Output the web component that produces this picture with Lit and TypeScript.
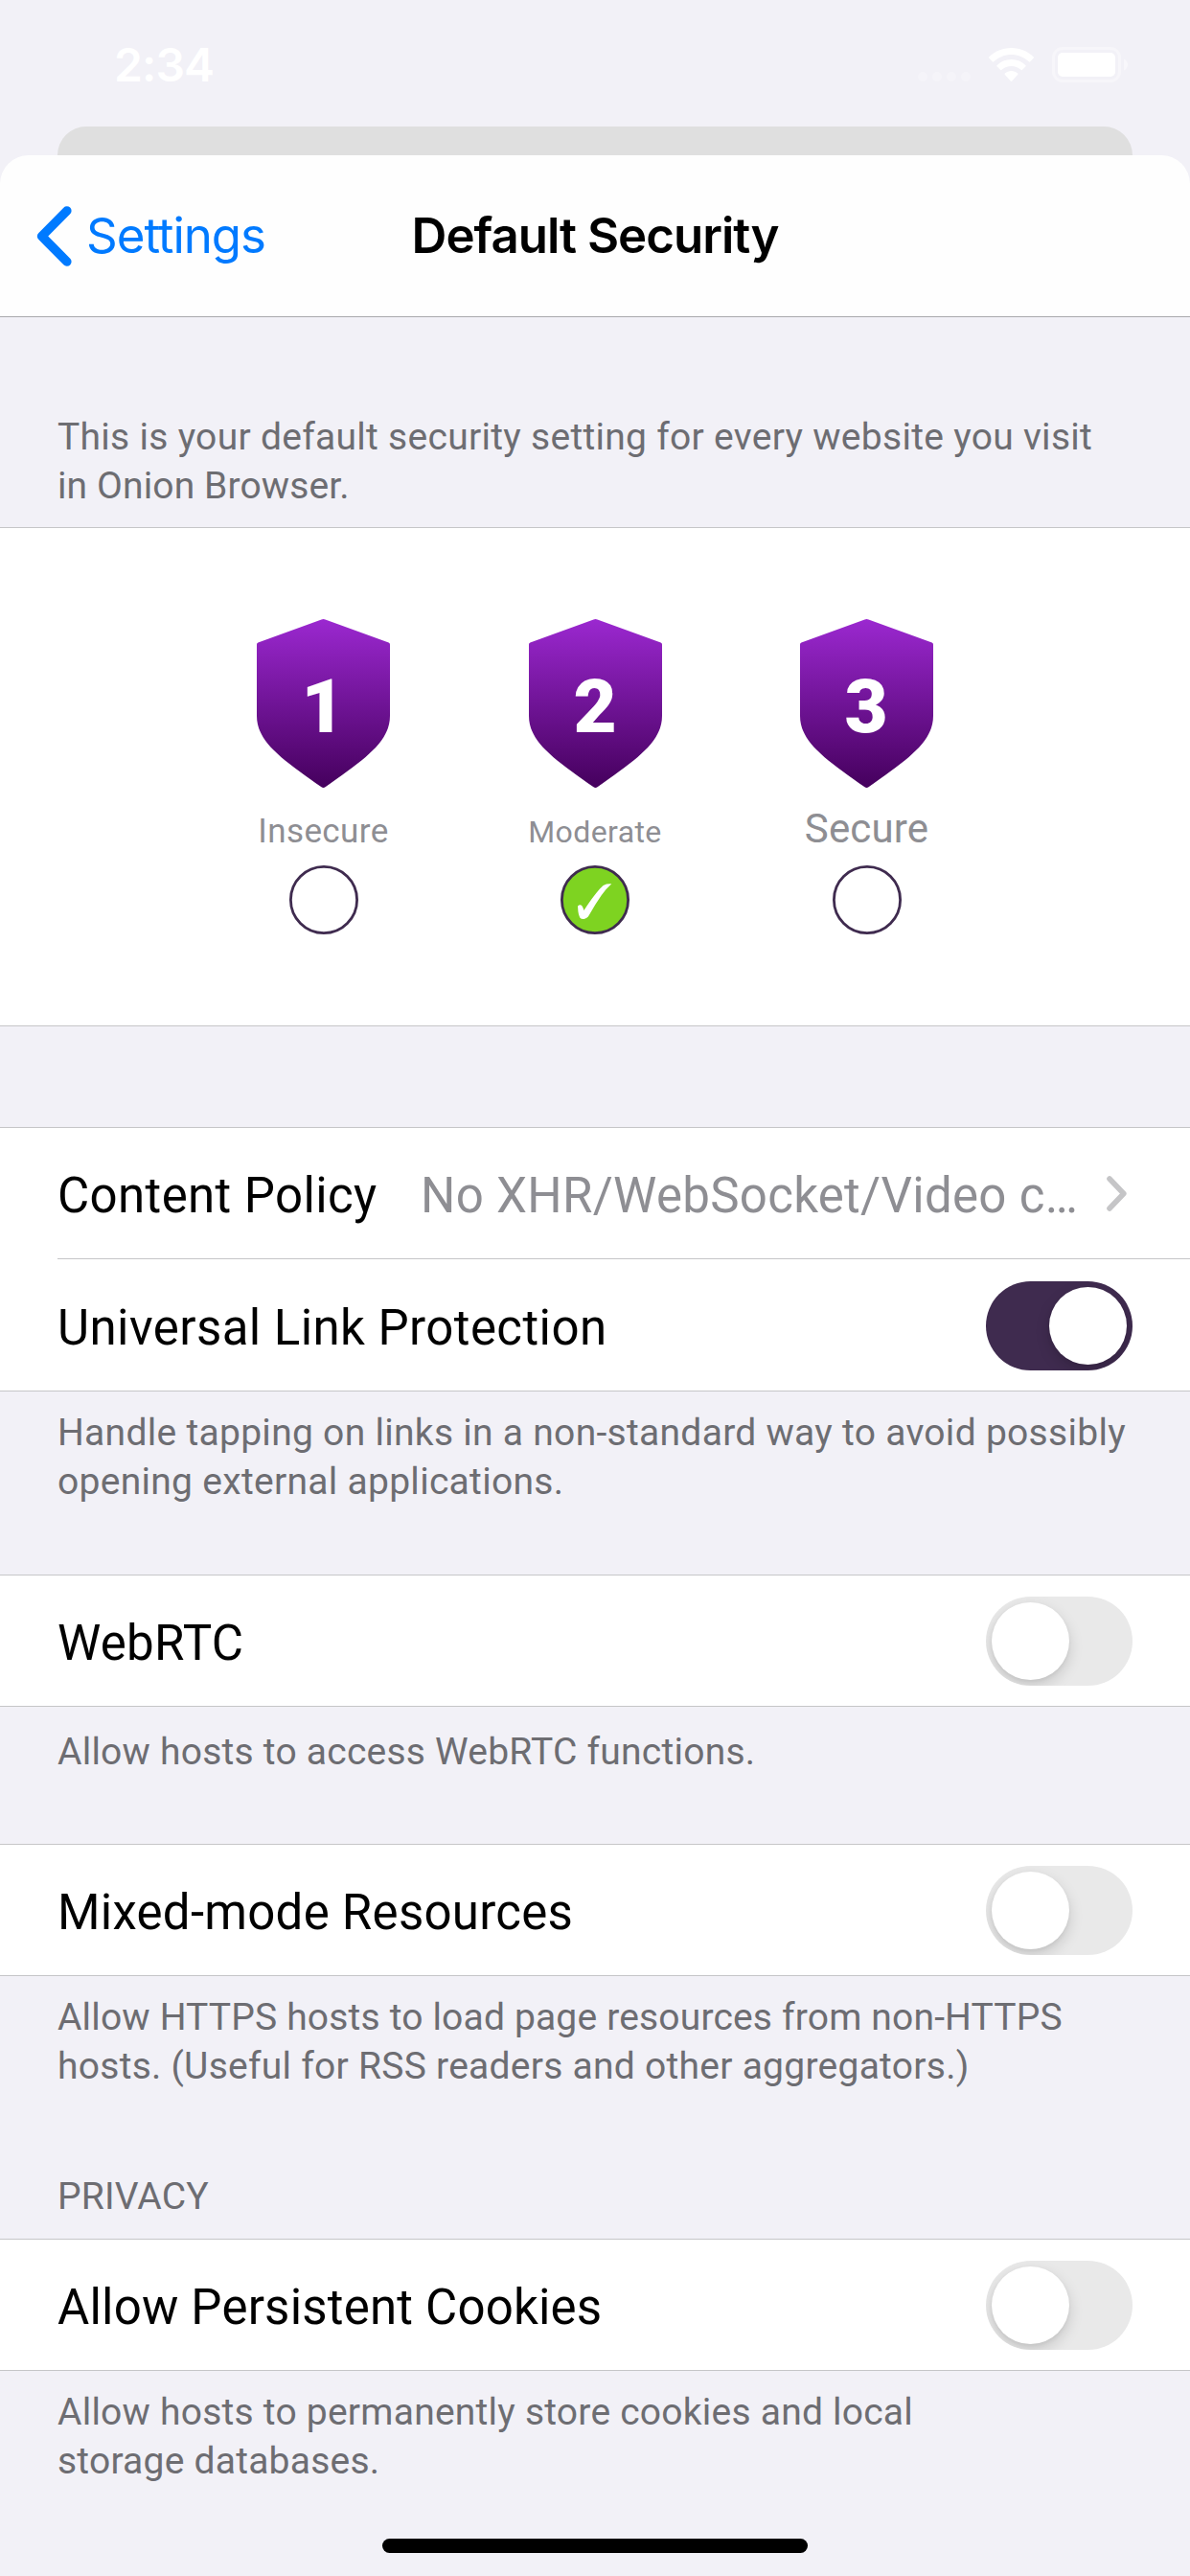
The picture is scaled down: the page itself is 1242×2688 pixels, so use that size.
import { LitElement, html, svg, css, nothing } from "lit";
import { customElement, property } from "lit/decorators.js";
import { styleMap } from "lit/directives/style-map.js";
import { classMap } from "lit/directives/class-map.js";

interface Line {
  text: string;
  tracking: number;
}

interface Level {
  digit: string;
  label: string;
  size: number;
  tracking: number;
  selected: boolean;
}

const LEVELS: Level[] = [
  { digit: "1", label: "Insecure", size: 35, tracking: 0.4, selected: false },
  { digit: "2", label: "Moderate", size: 32, tracking: 0.4, selected: true },
  { digit: "3", label: "Secure", size: 42, tracking: 0.15, selected: false },
];

const INTRO: Line[] = [
  { text: "This is your default security setting for every website you visit", tracking: 0.29 },
  { text: "in Onion Browser.", tracking: 0.12 },
];
const LINK_NOTE: Line[] = [
  { text: "Handle tapping on links in a non-standard way to avoid possibly", tracking: 0.29 },
  { text: "opening external applications.", tracking: 0.29 },
];
const WEBRTC_NOTE: Line[] = [
  { text: "Allow hosts to access WebRTC functions.", tracking: 0.23 },
];
const MIXED_NOTE: Line[] = [
  { text: "Allow HTTPS hosts to load page resources from non-HTTPS", tracking: 0.17 },
  { text: "hosts. (Useful for RSS readers and other aggregators.)", tracking: 0.26 },
];
const COOKIE_NOTE: Line[] = [
  { text: "Allow hosts to permanently store cookies and local", tracking: 0.23 },
  { text: "storage databases.", tracking: 0.23 },
];

const tracked = (l: Line) =>
  html`<span class="tracked" style=${styleMap({ letterSpacing: `${l.tracking}px` })}>${l.text}</span>`;

@customElement("toggle-switch")
export class ToggleSwitch extends LitElement {
  @property({ type: Boolean }) on = false;

  static styles = css`
    :host {
      display: block;
      flex: none;
    }
    .track {
      display: flex;
      box-sizing: border-box;
      width: 153px;
      height: 93px;
      padding: 6px;
      border-radius: 46.5px;
      background: #e9e9e9;
      overflow: hidden;
    }
    .track.on {
      justify-content: flex-end;
      background: #3f2b4f;
    }
    .knob {
      width: 81px;
      height: 81px;
      border-radius: 50%;
      background: #fff;
      box-shadow: 0 6px 15px rgba(0, 0, 0, 0.15), 0 2px 4px rgba(0, 0, 0, 0.05);
    }
  `;

  render() {
    return html`<div class=${classMap({ track: true, on: this.on })}><div class="knob"></div></div>`;
  }
}

@customElement("security-level")
export class SecurityLevel extends LitElement {
  @property({ attribute: false }) level!: Level;

  static styles = css`
    :host {
      display: flex;
      flex-direction: column;
      align-items: center;
      width: 139px;
    }
    .shield {
      display: block;
      width: 139px;
      height: 176px;
    }
    .digit {
      font: 900 78px Roboto, sans-serif;
      fill: #fff;
    }
    .label {
      height: 72px;
      padding-top: 9px;
      font-size: 36px;
      line-height: 73px;
      color: #8e8e93;
      white-space: nowrap;
    }
    .name {
      line-height: 0;
    }
    .radio {
      display: block;
      width: 72px;
      height: 72px;
    }
  `;

  render() {
    const { digit, label, size, tracking, selected } = this.level;
    return html`
      <svg class="shield" viewBox="0 0 139 176">
        <defs>
          <linearGradient id="fade" x1="0" y1="0" x2="0" y2="1">
            <stop offset="0" stop-color="#9b28d0" />
            <stop offset="1" stop-color="#45005d" />
          </linearGradient>
        </defs>
        <path
          fill="url(#fade)"
          d="M67.5 0.4 Q69.5 -0.4 71.5 0.4 L137.6 24.6 Q139 25.2 139 26.6 V101 C139 128 113 146 71.5 175.3 Q69.5 176.6 67.5 175.3 C26 146 0 128 0 101 V26.6 Q0 25.2 1.4 24.6 Z"
        />
        <text class="digit" x="69" y="118" text-anchor="middle">${digit}</text>
      </svg>
      <div class="label">
        <span class="name" style=${styleMap({ fontSize: `${size}px`, letterSpacing: `${tracking}px` })}>${label}</span>
      </div>
      <svg class="radio" viewBox="0 0 72 72">
        <circle cx="36" cy="36" r="34.6" fill=${selected ? "#7ed321" : "#fff"} stroke="#3f2b4f" stroke-width="2.8" />
        ${selected
          ? svg`<path fill="#fff" d="M18 42.4 Q20.6 40.4 22.4 42.2 Q23.6 43.8 24.4 47 Q33 33.5 41 24.4 Q44.6 20.4 48 19.6 Q50.6 19 53.3 19.3 Q47 25 42.7 31.2 Q36.5 40 29.8 52 Q27.6 55.8 24.4 55.9 Q21.4 56 20.2 54.4 Q18.8 51.8 18.4 48 Z" />`
          : nothing}
      </svg>
    `;
  }
}

@customElement("app-root")
export class AppRoot extends LitElement {
  static styles = css`
    :host {
      display: flex;
      flex-direction: column;
      width: 1242px;
      height: 2688px;
      overflow: hidden;
      background: #f2f1f7;
      font-family: Roboto, sans-serif;
      color: #000;
    }
    svg {
      display: block;
      flex: none;
    }
    .status {
      display: flex;
      align-items: flex-start;
      box-sizing: border-box;
      height: 132px;
      padding: 49px 65px 0 119px;
    }
    .time {
      margin: -10px auto 0 0;
      font: 600 48px/58px Inter, sans-serif;
      letter-spacing: -0.9px;
      color: #fff;
    }
    .dots {
      width: 56px;
      height: 10px;
      margin: 26px 18px 0 0;
    }
    .wifi {
      width: 47px;
      height: 35px;
      margin: 1px 19px 0 0;
    }
    .battery {
      width: 79px;
      height: 37px;
    }
    .peek {
      height: 30px;
      margin: 0 60px;
      border-radius: 30px 30px 0 0;
      background: #dfdfdf;
    }
    .nav {
      display: grid;
      grid-template-columns: 1fr auto 1fr;
      align-items: center;
      height: 168px;
      padding: 0 38px;
      border-bottom: 1px solid #a9a9ad;
      border-radius: 30px 30px 0 0;
      background: #fefefe;
      font-family: Inter, sans-serif;
      font-size: 51px;
      line-height: 62px;
    }
    .back {
      display: flex;
      align-items: center;
      gap: 15px;
      color: #007aff;
      letter-spacing: -1.04px;
    }
    .chevron {
      width: 37px;
      height: 63px;
    }
    .title {
      font-weight: 600;
      letter-spacing: -1px;
    }
    .note {
      box-sizing: border-box;
      padding: 18px 60px 0;
      font-size: 39px;
      line-height: 51px;
      color: #6d6d72;
      white-space: nowrap;
    }
    .note .tracked {
      display: block;
    }
    .intro {
      height: 219px;
      padding-top: 100px;
    }
    .after-links {
      height: 191px;
    }
    .after-webrtc {
      height: 143px;
      padding-top: 22px;
    }
    .after-mixed {
      height: 204px;
    }
    .heading {
      height: 70px;
      padding-top: 1px;
    }
    .after-cookies {
      height: 175px;
    }
    .group {
      border-top: 1px solid #c6c6c8;
      border-bottom: 1px solid #c6c6c8;
      background: #fff;
    }
    .levels {
      display: flex;
      justify-content: center;
      gap: 144.5px;
      height: 424px;
      padding-top: 95px;
    }
    .levels-group {
      margin-bottom: 105px;
    }
    .row {
      display: flex;
      align-items: center;
      height: 136px;
      padding: 0 60px;
      font-size: 51px;
      line-height: 60px;
      white-space: nowrap;
    }
    .row toggle-switch {
      align-self: flex-start;
      margin: 22px 0 0 auto;
    }
    .row > .text {
      padding-top: 6px;
    }
    .row.link {
      padding-right: 66px;
    }
    .value {
      margin-left: 45.5px;
      color: #8e8e93;
    }
    .disclosure {
      width: 21px;
      height: 37px;
      margin-left: auto;
    }
    .divider {
      height: 1px;
      margin: 0 0 1px 60px;
      background: #c6c6c8;
    }
    .home {
      width: 444px;
      height: 15px;
      margin: 0 auto;
      border-radius: 7.5px;
      background: #000;
    }
  `;

  private toggleRow(text: string, tracking: number, on = false) {
    return html`<div class="row">
      <div class="text">${tracked({ text, tracking })}</div>
      <toggle-switch ?on=${on}></toggle-switch>
    </div>`;
  }

  render() {
    return html`
      <div class="status">
        <div class="time">2:34</div>
        <svg class="dots" viewBox="0 0 56 10" fill="#f5f4f9">
          ${[5, 20, 35, 50].map((x) => svg`<circle cx=${x} cy="5" r="5" />`)}
        </svg>
        <svg class="wifi" viewBox="0 0 47 35" fill="#fff">
          <path d="M23.5 0 C32.6 0 40.8 3.6 46.6 9.3 Q47.3 10 46.6 10.8 L43.2 14.3 Q42.5 15 41.8 14.3 C36.8 9.6 30.4 7 23.5 7 C16.6 7 10.2 9.6 5.2 14.3 Q4.5 15 3.8 14.3 L0.4 10.8 Q-0.3 10 0.4 9.3 C6.2 3.6 14.4 0 23.5 0 Z" />
          <path d="M23.5 12 C29.3 12 34.5 14.2 38.4 17.9 Q39.1 18.6 38.4 19.4 L35 22.8 Q34.3 23.5 33.6 22.8 C30.8 20.3 27.3 18.9 23.5 18.9 C19.7 18.9 16.2 20.3 13.4 22.8 Q12.7 23.5 12 22.8 L8.6 19.4 Q7.9 18.6 8.6 17.9 C12.5 14.2 17.7 12 23.5 12 Z" />
          <path d="M23.5 24 C26 24 28.3 24.9 30.1 26.4 Q30.8 27.1 30.1 27.9 L24.2 34.4 Q23.5 35.1 22.8 34.4 L16.9 27.9 Q16.2 27.1 16.9 26.4 C18.7 24.9 21 24 23.5 24 Z" />
        </svg>
        <svg class="battery" viewBox="0 0 79 37">
          <rect x="1.5" y="1.5" width="69" height="34" rx="9.5" fill="none" stroke="#f7f6fa" stroke-width="3" />
          <rect x="6" y="6" width="60" height="25" rx="5" fill="#fff" />
          <path d="M75 12.5 Q79 14.5 79 18.5 Q79 22.5 75 24.5 Z" fill="#f8f7fb" />
        </svg>
      </div>
      <div class="peek"></div>
      <div class="nav">
        <div class="back">
          <svg class="chevron" viewBox="0 0 37 63" fill="none" stroke="#007aff" stroke-width="9.6" stroke-linecap="round" stroke-linejoin="round">
            <path d="M31.8 5 L5.6 31.5 L31.8 58" />
          </svg>
          <span>Settings</span>
        </div>
        <div class="title">Default Security</div>
      </div>

      <div class="note intro">${INTRO.map(tracked)}</div>
      <div class="group levels-group">
        <div class="levels">
          ${LEVELS.map((level) => html`<security-level .level=${level}></security-level>`)}
        </div>
      </div>

      <div class="group">
        <div class="row link">
          <div class="text">${tracked({ text: "Content Policy", tracking: 0.38 })}</div>
          <div class="text value">${tracked({ text: "No XHR/WebSocket/Video c…", tracking: 0.3 })}</div>
          <svg class="disclosure" viewBox="0 0 21 37" fill="none" stroke="#c5c5c7" stroke-width="5.6" stroke-linecap="round" stroke-linejoin="round">
            <path d="M3 3 L17.8 18.5 L3 34" />
          </svg>
        </div>
        <div class="divider"></div>
        ${this.toggleRow("Universal Link Protection", 0.43, true)}
      </div>
      <div class="note after-links">${LINK_NOTE.map(tracked)}</div>

      <div class="group">${this.toggleRow("WebRTC", 0.3)}</div>
      <div class="note after-webrtc">${WEBRTC_NOTE.map(tracked)}</div>

      <div class="group">${this.toggleRow("Mixed-mode Resources", 0.27)}</div>
      <div class="note after-mixed">${MIXED_NOTE.map(tracked)}</div>

      <div class="note heading">${tracked({ text: "PRIVACY", tracking: 0.15 })}</div>
      <div class="group">${this.toggleRow("Allow Persistent Cookies", 0.2)}</div>
      <div class="note after-cookies">${COOKIE_NOTE.map(tracked)}</div>
      <div class="home"></div>
    `;
  }
}
